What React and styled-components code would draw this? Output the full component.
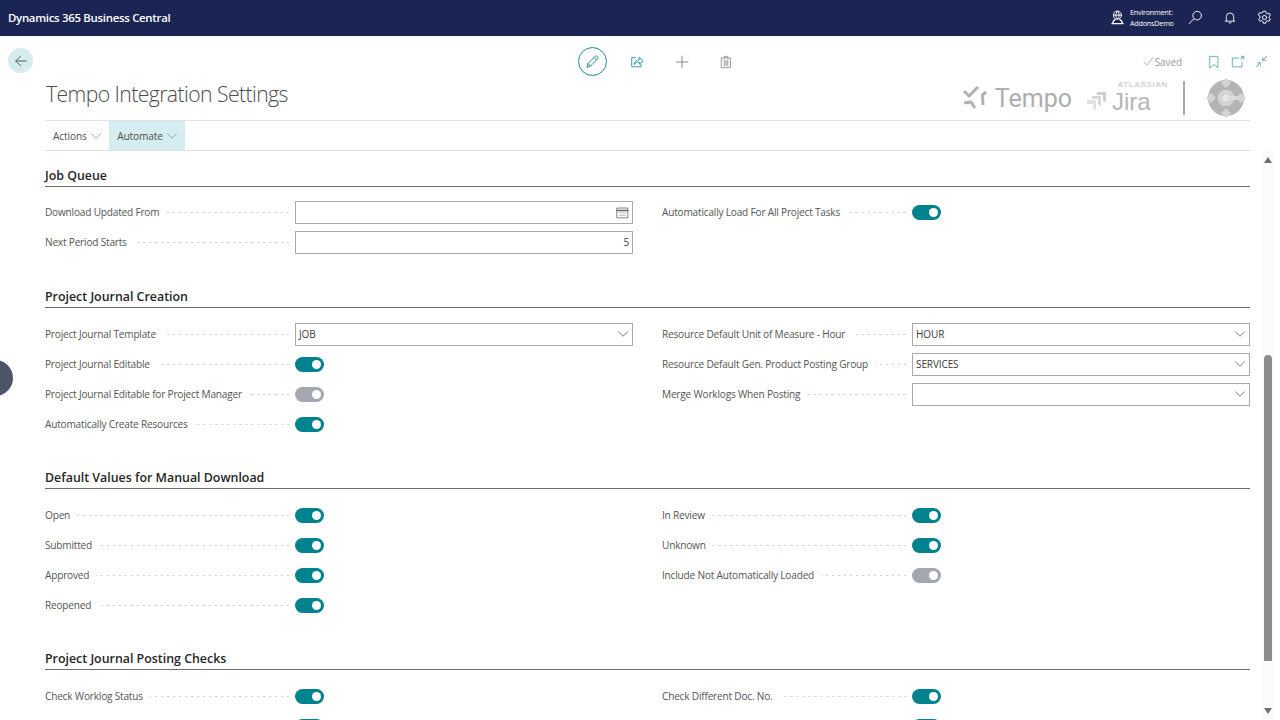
import React from "react"
import styled, { createGlobalStyle } from "styled-components"
import { ChevronDown, Plus } from "lucide-react"

const GlobalStyle = createGlobalStyle`
  html, body {
    margin: 0;
    height: 100%;
    overflow: hidden;
    background: #ffffff;
    font-family: "Open Sans", "Noto Sans", sans-serif;
  }
  * { box-sizing: border-box; }
`

const Page = styled.div`
  position: relative;
  width: 1280px;
  height: 720px;
  overflow: hidden;
  display: flex;
  flex-direction: column;
`

const TopBar = styled.header`
  flex: 0 0 36px;
  display: flex;
  align-items: center;
  justify-content: space-between;
  padding: 0 8px 1px;
  background: #1a2553;
  color: #ffffff;
`

const Brand = styled.span`
  font-size: 11.4px;
  font-weight: 600;
  letter-spacing: -0.28px;
  padding-bottom: 1px;
`

const TopActions = styled.div`
  display: flex;
  align-items: center;
  gap: 20px;
`

const Environment = styled.div`
  display: flex;
  align-items: center;
  gap: 5px;
  margin-right: -6px;
`

const EnvText = styled.div`
  font-size: 7.2px;
  line-height: 11px;
  letter-spacing: -0.2px;
  width: 44px;
`

const PageHeader = styled.div`
  flex: 0 0 84px;
  display: grid;
  grid-template-columns: 45px 1fr 30px;
  grid-template-rows: 42px 42px;
`

const BackCell = styled.div`
  padding: 12px 0 0 8px;
`

const BackButton = styled.div`
  width: 25px;
  height: 25px;
  border-radius: 50%;
  background: #d5ecf0;
  display: flex;
  align-items: center;
  justify-content: center;
`

const ToolRow = styled.div`
  grid-column: 2 / 4;
  display: grid;
  grid-template-columns: 533px auto 1fr;
  align-items: start;
  padding: 11px 12px 0 0;
`

const Tools = styled.div`
  grid-column: 2;
  display: flex;
  align-items: center;
  gap: 15.5px;
`

const ToolIcon = styled.div`
  width: 29px;
  height: 29px;
  display: flex;
  align-items: center;
  justify-content: center;
  border-radius: 50%;
  border: ${(p) => (p.$active ? "1.3px solid #1f8a94" : "none")};
  color: ${(p) => p.$color || "#8a8a8a"};
`

const StatusRow = styled.div`
  grid-column: 3;
  height: 29px;
  display: flex;
  align-items: center;
  justify-content: flex-end;
  gap: 10px;
  color: #5aa6ae;
`

const Saved = styled.span`
  display: flex;
  align-items: center;
  gap: 1px;
  font-size: 10px;
  letter-spacing: -0.1px;
  color: #9a9a9a;
  margin-right: 15px;
`

const TitleRow = styled.div`
  grid-column: 2;
  display: flex;
  align-items: flex-start;
  justify-content: space-between;
`

const Title = styled.h1`
  margin: 0 0 0 1px;
  font-size: 21.2px;
  line-height: 32px;
  font-weight: 300;
  letter-spacing: -0.58px;
  color: #4c4c4c;
`

const Logos = styled.div`
  height: 40px;
  display: flex;
  align-items: center;
  margin-right: 4px;
  color: #b4b4b4;
`

const TempoWord = styled.span`
  font-family: "Roboto", sans-serif;
  font-size: 25px;
  font-weight: 400;
  color: #aeaeae;
  margin-left: 8px;
`

const JiraBlock = styled.div`
  width: 82px;
  display: flex;
  flex-direction: column;
  margin: -3px 0 0 14px;
`

const AtlassianWord = styled.span`
  align-self: flex-end;
  font-family: "Liberation Sans", sans-serif;
  font-size: 8px;
  font-weight: 700;
  letter-spacing: 0.6px;
  color: #d2d2d2;
  line-height: 9px;
  margin-bottom: 2px;
`

const JiraWord = styled.span`
  display: flex;
  align-items: center;
  gap: 5px;
  font-family: "Liberation Sans", sans-serif;
  font-size: 24px;
  line-height: 22px;
  color: #b6b6b6;
`

const LogoRule = styled.span`
  width: 2px;
  height: 34px;
  margin: 0 21px 0 15px;
  background: #a8a8a8;
`

const MenuBar = styled.nav`
  flex: 0 0 31px;
  margin: 0 30px 0 45px;
  display: flex;
  border-top: 1px solid #e3e3e3;
  border-bottom: 1px solid #e3e3e3;
`

const MenuItem = styled.div`
  display: flex;
  align-items: center;
  padding: 1px 4.5px 0 8px;
  font-size: 10.1px;
  letter-spacing: -0.1px;
  color: #4f4f4f;
  background: ${(p) => (p.$active ? "#d5ecf0" : "transparent")};
`

const Body = styled.main`
  flex: 1;
  min-height: 0;
  display: flex;
  padding-left: 45px;
`

const Form = styled.div`
  width: 1205px;
`

const Section = styled.section`
  padding-top: ${(p) => p.$top || 0}px;
`

const SectionTitle = styled.h2`
  margin: 0 0 ${(p) => p.$gap}px;
  height: 23px;
  line-height: 23px;
  font-size: 12.4px;
  font-weight: 600;
  color: #262626;
  border-bottom: 1px solid #6e6e6e;
`

const Columns = styled.div`
  display: grid;
  grid-template-columns: 588px 588px;
  column-gap: 29px;
`

const Column = styled.div`
  display: flex;
  flex-direction: column;
`

const Row = styled.div`
  height: 30px;
  display: flex;
  align-items: center;
`

const Label = styled.span`
  flex: 0 0 250px;
  display: flex;
  align-items: center;
  font-size: 10.1px;
  letter-spacing: -0.2px;
  color: #555555;
  white-space: nowrap;
`

const Leader = styled.span`
  flex: 1;
  height: 3px;
  margin: 0 4px 0 7px;
  background-image: radial-gradient(circle, #d0d0d0 0.7px, transparent 0.9px);
  background-size: 6px 3px;
  background-position: right center;
`

const Field = styled.div`
  width: 338px;
  height: 23px;
  display: flex;
  align-items: center;
  justify-content: space-between;
  padding: 0 3px;
  border: 1px solid #a9a9a9;
  font-size: 10px;
  letter-spacing: -0.1px;
  color: #3a3a3a;
`

const FieldValue = styled.span`
  flex: 1;
  text-align: ${(p) => (p.$right ? "right" : "left")};
`

const SelectChevron = styled(ChevronDown)`
  margin-right: -3px;
  color: #666666;
`

const Toggle = styled.span`
  width: 29px;
  height: 15px;
  border-radius: 8px;
  background: ${(p) => (p.$off ? "#a3a7af" : "#00838f")};
  display: flex;
  align-items: center;
  justify-content: flex-end;
  padding-right: 3px;
  &::after {
    content: "";
    width: 9px;
    height: 9px;
    border-radius: 50%;
    background: #ffffff;
  }
`

const ScrollBar = styled.div`
  flex: 0 0 10px;
  margin-left: 13px;
  display: flex;
  flex-direction: column;
  align-items: center;
  background: #fbfbfb;
`

const ScrollArrow = styled.span`
  flex: none;
  width: 0;
  height: 0;
  margin-top: ${(p) => p.$top || 0}px;
  border-left: 4px solid transparent;
  border-right: 4px solid transparent;
  ${(p) => (p.$down ? "border-top" : "border-bottom")}: 6px solid #6f6f6f;
`

const ScrollThumb = styled.span`
  flex: none;
  width: 8px;
  height: 306px;
  margin-top: 192px;
  border-radius: 4px 4px 0 0;
  background: #8c8c8c;
`

const SideHandle = styled.div`
  position: absolute;
  left: -23px;
  top: 360px;
  width: 36px;
  height: 36px;
  border-radius: 50%;
  background: #4b5568;
`

const Stroke = ({ size = 16, color = "currentColor", width = 1, children, box = 16 }) => (
  <svg
    width={size}
    height={size}
    viewBox={`0 0 ${box} ${box}`}
    fill="none"
    stroke={color}
    strokeWidth={width}
    strokeLinecap="round"
    strokeLinejoin="round"
  >
    {children}
  </svg>
)

const GlobeUser = () => (
  <Stroke size={15}>
    <circle cx="8" cy="5.5" r="4.3" />
    <path d="M3.7 5.5h8.6M8 1.2c-2.4 2.6-2.4 6 0 8.6M8 1.2c2.4 2.6 2.4 6 0 8.6" />
    <path d="M2 14.5h12M3 14.5c0-2.2 1-3.6 2.4-4.2M13 14.5c0-2.2-1-3.6-2.4-4.2" strokeWidth="1.4" />
  </Stroke>
)

const SearchIcon = () => (
  <Stroke size={15}>
    <circle cx="9.8" cy="6" r="4.6" />
    <path d="M6.4 9.2 1.3 14.6" />
  </Stroke>
)

const BellIcon = () => (
  <Stroke size={14}>
    <path d="M3.8 11.5V6.4a4.2 4.2 0 0 1 8.4 0v5.1M2.6 11.6h10.8" />
    <path d="M6.6 13.2c.5 1.1 2.3 1.1 2.8 0" />
  </Stroke>
)

const GearIcon = () => (
  <Stroke size={15}>
    <path d="M6.7 1.3h2.6l.4 1.9 1.4.8 1.9-.6 1.3 2.2-1.5 1.3v1.6l1.5 1.3-1.3 2.2-1.9-.6-1.4.8-.4 1.9H6.7l-.4-1.9-1.4-.8-1.9.6-1.3-2.2 1.5-1.3V6.4L1.2 5.1l1.3-2.2 1.9.6 1.4-.8z" />
    <circle cx="8" cy="8" r="2.2" />
  </Stroke>
)

const ArrowIcon = () => (
  <Stroke size={14} color="#4c4c4c">
    <path d="M14 8H2M7.5 2.5 2 8l5.5 5.5" />
  </Stroke>
)

const PencilIcon = () => (
  <Stroke size={15} color="#1f8a94">
    <path d="M2.2 13.8l.9-3.6 7.6-7.6a1.9 1.9 0 0 1 2.7 2.7l-7.6 7.6zM9.6 3.7l2.7 2.7M3.1 10.2l2.7 2.7" />
  </Stroke>
)

const ShareIcon = () => (
  <Stroke size={14} color="#1f8a94">
    <path d="M6 3H2v10.5h10.5V10" />
    <path d="M5 10.5c.2-3.4 2.4-5 5.6-5V2.6L15 6.6l-4.4 3.8V8c-2.4 0-4 .7-5.6 2.5z" />
  </Stroke>
)

const TrashIcon = () => (
  <Stroke size={14} color="#8a8a8a">
    <path d="M3 3.5h10v11H3zM6 3.5V1.6h4v1.9M6 6v6M8 6v6M10 6v6" />
  </Stroke>
)

const CheckIcon = () => (
  <Stroke size={11} color="#8a9a9a">
    <path d="M1.5 9 5.5 13.5 14.5 2.5" />
  </Stroke>
)

const BookmarkIcon = () => (
  <Stroke size={14}>
    <path d="M3.5 1.5h9v13L8 11l-4.5 3.5z" />
  </Stroke>
)

const OpenNewIcon = () => (
  <Stroke size={14}>
    <path d="M9 3.5H1.5v10h11V8M11 5l3.5-3.5M11.5 1.5h3v3" />
  </Stroke>
)

const CollapseIcon = () => (
  <Stroke size={13}>
    <path d="M1.5 14.5 6.5 9.5M3 9.5h3.5V13M14.5 1.5l-5 5M13 6.5H9.5V3" />
  </Stroke>
)

const CalendarIcon = () => (
  <Stroke size={13} color="#666666">
    <rect x="1.5" y="2.5" width="13" height="12" />
    <path d="M1.5 5.5h13" strokeWidth="2" />
    <path d="M4.5 8.5h7M4.5 11.5h7" stroke="#aaaaaa" />
  </Stroke>
)

const TempoMark = () => (
  <svg width="24" height="24" viewBox="0 0 24 24" fill="none" stroke="#b0b0b0" strokeWidth="3" strokeLinejoin="round">
    <path d="M1 5 6 10 15 1" />
    <path d="M1 17 8 16 12 22" />
    <path d="M23 6 19.5 9 20 19" />
  </svg>
)

const JiraMark = () => (
  <svg width="21" height="21" viewBox="0 0 21 21">
    <path d="M1 8h9v10a3 3 0 0 1-3-3v-3H1z" fill="#e2e2e2" />
    <path d="M6 4h9v10a3 3 0 0 1-3-3V7H6z" fill="#d8d8d8" />
    <path d="M11 0h9v10a3 3 0 0 1-3-3V3h-6z" fill="#cecece" />
  </svg>
)

const CentralMark = () => (
  <svg width="40" height="40" viewBox="0 0 40 40">
    <circle cx="20" cy="20" r="13" fill="none" stroke="#b4b4b4" strokeWidth="10" />
    <circle cx="20" cy="20" r="8" fill="#d2d2d2" />
    <circle cx="20" cy="20" r="3.5" fill="#e6e6e6" />
    <path d="M22 20h13" stroke="#dcdcdc" strokeWidth="4" />
    <path d="M20 0l5 5-5 5-5-5zM20 30l5 5-5 5-5-5zM5 15l5 5-5 5-5-5zM35 15l5 5-5 5-5-5z" fill="#d4d4d4" />
  </svg>
)

const sections = [
  {
    title: "Job Queue",
    top: 13,
    gap: 10,
    left: [
      { label: "Download Updated From", field: "", calendar: true },
      { label: "Next Period Starts", field: "5", right: true },
    ],
    right: [{ label: "Automatically Load For All Project Tasks", toggle: true }],
  },
  {
    title: "Project Journal Creation",
    top: 28,
    gap: 11,
    left: [
      { label: "Project Journal Template", field: "JOB", select: true },
      { label: "Project Journal Editable", toggle: true },
      { label: "Project Journal Editable for Project Manager", toggle: true, off: true },
      { label: "Automatically Create Resources", toggle: true },
    ],
    right: [
      { label: "Resource Default Unit of Measure - Hour", field: "HOUR", select: true },
      { label: "Resource Default Gen. Product Posting Group", field: "SERVICES", select: true },
      { label: "Merge Worklogs When Posting", field: "", select: true },
    ],
  },
  {
    title: "Default Values for Manual Download",
    top: 27,
    gap: 11,
    left: [
      { label: "Open", toggle: true },
      { label: "Submitted", toggle: true },
      { label: "Approved", toggle: true },
      { label: "Reopened", toggle: true },
    ],
    right: [
      { label: "In Review", toggle: true },
      { label: "Unknown", toggle: true },
      { label: "Include Not Automatically Loaded", toggle: true, off: true },
    ],
  },
  {
    title: "Project Journal Posting Checks",
    top: 27,
    gap: 11,
    left: [{ label: "Check Worklog Status", toggle: true }, { toggle: true }],
    right: [{ label: "Check Different Doc. No.", toggle: true }, { toggle: true }],
  },
]

function FormRow({ item }) {
  return (
    <Row>
      <Label>
        {item.label}
        {item.label && <Leader />}
      </Label>
      {item.toggle ? (
        <Toggle $off={item.off} />
      ) : (
        <Field>
          <FieldValue $right={item.right}>{item.field}</FieldValue>
          {item.calendar && <CalendarIcon />}
          {item.select && <SelectChevron size={18} strokeWidth={1.1} />}
        </Field>
      )}
    </Row>
  )
}

export default function App() {
  return (
    <Page>
      <GlobalStyle />
      <TopBar>
        <Brand>Dynamics 365 Business Central</Brand>
        <TopActions>
          <Environment>
            <GlobeUser />
            <EnvText>
              Environment:
              <br />
              AddonsDemo
            </EnvText>
          </Environment>
          <SearchIcon />
          <BellIcon />
          <GearIcon />
        </TopActions>
      </TopBar>

      <PageHeader>
        <BackCell>
          <BackButton>
            <ArrowIcon />
          </BackButton>
        </BackCell>
        <ToolRow>
          <Tools>
            <ToolIcon $active>
              <PencilIcon />
            </ToolIcon>
            <ToolIcon>
              <ShareIcon />
            </ToolIcon>
            <ToolIcon>
              <Plus size={20} strokeWidth={1.2} />
            </ToolIcon>
            <ToolIcon>
              <TrashIcon />
            </ToolIcon>
          </Tools>
          <StatusRow>
            <Saved>
              <CheckIcon />
              Saved
            </Saved>
            <BookmarkIcon />
            <OpenNewIcon />
            <CollapseIcon />
          </StatusRow>
        </ToolRow>
        <span />
        <TitleRow>
          <Title>Tempo Integration Settings</Title>
          <Logos>
            <TempoMark />
            <TempoWord>Tempo</TempoWord>
            <JiraBlock>
              <AtlassianWord>ATLASSIAN</AtlassianWord>
              <JiraWord>
                <JiraMark />
                Jira
              </JiraWord>
            </JiraBlock>
            <LogoRule />
            <CentralMark />
          </Logos>
        </TitleRow>
      </PageHeader>

      <MenuBar>
        <MenuItem>
          Actions <ChevronDown size={18} strokeWidth={1} color="#888888" />
        </MenuItem>
        <MenuItem $active>
          Automate <ChevronDown size={18} strokeWidth={1} color="#888888" />
        </MenuItem>
      </MenuBar>

      <Body>
        <Form>
          {sections.map((section) => (
            <Section key={section.title} $top={section.top}>
              <SectionTitle $gap={section.gap}>{section.title}</SectionTitle>
              <Columns>
                <Column>
                  {section.left.map((item, i) => (
                    <FormRow key={i} item={item} />
                  ))}
                </Column>
                <Column>
                  {section.right.map((item, i) => (
                    <FormRow key={i} item={item} />
                  ))}
                </Column>
              </Columns>
            </Section>
          ))}
        </Form>
        <ScrollBar>
          <ScrollArrow $top={6} />
          <ScrollThumb />
          <ScrollArrow $down $top={47} />
        </ScrollBar>
      </Body>

      <SideHandle />
    </Page>
  )
}
